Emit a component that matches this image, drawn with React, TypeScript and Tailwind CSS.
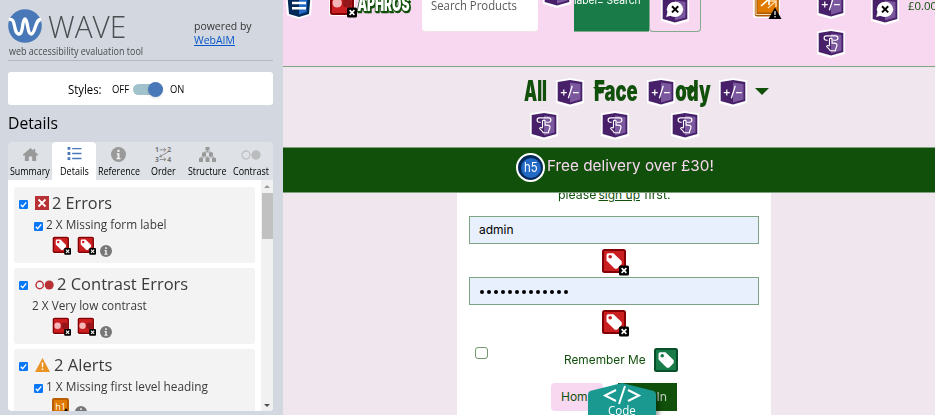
import React from "react";

const sans = "font-['Open_Sans',sans-serif]";
const inter = "font-['Inter',sans-serif]";

function Fit({ children, w, className = "", underline = false }: { children: string; w: number; className?: string; underline?: boolean }) {
  const ref = React.useRef<HTMLSpanElement>(null);
  const [scale, setScale] = React.useState(1);
  React.useLayoutEffect(() => {
    const measure = () => {
      if (ref.current) setScale(w / ref.current.offsetWidth);
    };
    measure();
    document.fonts.ready.then(measure);
  }, [w]);
  return (
    <span className={"flex shrink-0 whitespace-nowrap " + className} style={{ width: w }}>
      <span ref={ref} className={"block shrink-0 origin-left" + (underline ? " underline" : "")} style={{ transform: `scaleX(${scale})` }}>{children}</span>
    </span>
  );
}

function Hex({ kind, className }: { kind: "expand" | "hand" | "label"; className: string }) {
  return (
    <svg viewBox="0 0 30 30" className={"absolute h-[30px] w-[30px] " + className}>
      <path d="M15 1 L29 3.5 V26 L15 30 L1 26 V3.5Z" fill="#fff" />
      <path d="M15 3 L27.3 5 V24 L15 27.5 L2.7 24 V5Z" fill="#472069" />
      <path d="M15 5.5 L25.5 7 V22.5 L15 25.5Z" fill="#7b579d" />
      {kind === "expand" && (
        <path d="M5.8 15.5h6M8.8 12.5v6M17.3 8.8l-4 12.5M18 15.5h5.8" stroke="#fff" strokeWidth="1.25" fill="none" />
      )}
      {kind === "hand" && (
        <path d="M11.8 12.2H10.3a2.2 2.2 0 0 1 0-4.4h9.4a2.2 2.2 0 0 1 0 4.4H17M13.5 17.5V10.8q1.4-1.4 2.6 0v4.4q4.7-.5 4.9 1.7c0 2-1.6 3.2-1.6 5.8h-5.2c-.8-2.2-2.4-2.5-3.6-4.2q1-1.8 2.9-.2" stroke="#fff" strokeWidth="1.15" fill="none" />
      )}
      {kind === "label" && (
        <>
          <ellipse cx="15" cy="14.3" rx="8.2" ry="7.6" fill="#fff" />
          <path d="M7.5 17 L6.2 22 L13 20Z" fill="#fff" />
          <path d="M12 11.2l6.2 6.2M18.2 11.2L12 17.4" stroke="#000" strokeWidth="2" />
        </>
      )}
    </svg>
  );
}

function Mark({ kind, className, green = false, badge = true }: { kind: "tag" | "contrast"; className: string; green?: boolean; badge?: boolean }) {
  return (
    <svg viewBox="0 0 28 28" className={className}>
      <rect x="0" y="0" width="26" height="26" rx="3" fill="#fff" />
      <rect x="1" y="1" width="24" height="24" rx="2.5" fill={green ? "#064f28" : "#800005"} />
      <rect x="3" y="3" width="20" height="20" fill={green ? "#187b48" : "#ca1e20"} />
      {kind === "tag" ? (
        <>
          <path d="M5.5 7 Q5.5 5.3 7.2 5.3 H12.5 L20.7 13.3 V16 L16 20.8 H13.8 L5.5 12.5Z" fill="#fff" />
          <circle cx="9.2" cy="8.8" r="1.8" fill={green ? "#187b48" : "#ca1e20"} />
        </>
      ) : (
        <>
          <circle cx="8.2" cy="12.9" r="4.7" fill="#f5b6b9" />
          <circle cx="18.2" cy="12.9" r="4.7" fill="#94161a" />
        </>
      )}
      {badge && (
        <>
          <rect x="18" y="17.5" width="10" height="10" rx="1.5" fill="#000" />
          <path d="M20.6 20.1l4.8 4.8M25.4 20.1l-4.8 4.8" stroke="#fff" strokeWidth="1.6" />
        </>
      )}
    </svg>
  );
}

function Check({ className = "" }: { className?: string }) {
  return (
    <svg viewBox="0 0 10 10" className={"h-[9px] w-[9px] shrink-0 " + className}>
      <rect width="10" height="10" rx="1.3" fill="#0878f8" />
      <path d="M2 5.2 L4.1 7.4 L8 2.7" stroke="#fff" strokeWidth="1.5" fill="none" />
    </svg>
  );
}

function Info({ className = "", color = "#777" }: { className?: string; color?: string }) {
  return (
    <svg viewBox="0 0 16 16" className={"shrink-0 " + className}>
      <circle cx="8" cy="8" r="8" fill={color} />
      <path d="M6 6.7h3v5h1.2v1.3H5.8v-1.3H7V8H6ZM6.9 3h2.2v2.2H6.9Z" fill="#f1f1f1" />
    </svg>
  );
}

function Tab({ w, label, tw, active = false, children }: { w: string; label: string; tw: number; active?: boolean; children: React.ReactNode }) {
  return (
    <div className={"flex h-full flex-col items-center rounded-t " + w + (active ? " bg-white" : "")}>
      <div className="flex h-[22px] w-full items-end justify-center">{children}</div>
      <Fit w={tw} className="mt-[1px] text-[10px] leading-[13px] text-black">{label}</Fit>
    </div>
  );
}

function Sidebar() {
  return (
    <aside className={"flex h-full w-[283px] shrink-0 flex-col bg-[#d3d8e0] pl-2 pr-[10px] " + sans}>
      <header className="flex h-[61px] w-[265px] shrink-0 border-b border-[#b5b9bb]">
        <div className="w-[186px]">
          <div className="flex h-[43px] pt-[9px]">
            <svg viewBox="0 0 34 34" className="h-[34px] w-[34px]">
              <circle cx="17" cy="17" r="16.8" fill="#4978b8" />
              <path d="M1 10.5C5 10 5.5 12 6.4 16.5C7.5 22 8.3 25 11 25C15.5 25 14 10 17 10S19 25 23.2 25C27.5 25 27 10 33 10.5" stroke="#fff" strokeWidth="3.3" fill="none" />
            </svg>
            <Fit w={78} className="ml-[6px] text-[31px] font-light leading-[35px] text-[#4b4e50]">WAVE</Fit>
          </div>
          <Fit w={134} className="ml-[1px] text-[10px] leading-[16px] text-[#484b4e]">web accessibility evaluation tool</Fit>
        </div>
        <div className="flex flex-col pt-[19px] text-[11px] leading-[14px] text-[#333]">
          <Fit w={58}>powered by</Fit>
          <Fit w={41} underline className="text-[#0755c8]">WebAIM</Fit>
        </div>
      </header>
      <div className="mt-[11px] flex h-[33px] w-[265px] shrink-0 items-center rounded-[3px] bg-white pl-[60px] text-black">
        <Fit w={34} className="mt-[2px] text-[12px]">Styles:</Fit>
        <Fit w={17} className="ml-[10px] mt-[1px] text-[10px]">OFF</Fit>
        <div className="ml-[4px] mt-[2px] flex h-[11px] w-[30px] items-center justify-end rounded-full bg-[#a1c2ca]">
          <div className="h-[15px] w-[15px] rounded-full bg-[#4978b8] shadow-sm" />
        </div>
        <Fit w={14} className="ml-[7px] mt-[1px] text-[10px]">ON</Fit>
      </div>
      <h1 className="mt-[6px] h-[31px] shrink-0 text-[16px] leading-[25px] text-black"><Fit w={50}>Details</Fit></h1>
      <nav className="flex h-[38px] w-[265px] shrink-0 rounded-t bg-[#dee2e7]">
        <Tab w="w-[44px]" label="Summary" tw={40}>
          <svg viewBox="0 0 16 16" className="mb-[2px] h-[15px] w-[15px]"><path d="M0 8 8 1l3 2.6V2h2v3.4L16 8v1h-2v6H9.8v-5H6.2v5H2V9H0Z" fill="#999" /></svg>
        </Tab>
        <Tab w="w-[44px]" label="Details" tw={29} active>
          <svg viewBox="0 0 15 14" className="mb-[4px] h-[13px] w-[15px]"><path d="M0 0h3v3H0ZM5 1h10v1.5H5ZM0 5.5h3v3H0ZM5 6.2h10v1.5H5ZM0 11h3v3H0ZM5 11.7h10v1.5H5Z" fill="#4978b8" /></svg>
        </Tab>
        <Tab w="w-[45px]" label="Reference" tw={42}><Info color="#999" className="mb-[2px] h-[15px] w-[15px]" /></Tab>
        <Tab w="w-[44px]" label="Order" tw={25}>
          <svg viewBox="0 0 18 18" className="h-[18px] w-[17px]">
            <g fill="#777" fontFamily="Open Sans" fontSize="7.2" fontWeight="700"><text x="0" y="6.2">1</text><text x="13" y="6.2">2</text><text x="0" y="16.5">3</text><text x="13" y="16.5">4</text></g>
            <path d="M5 3.5h6.5M9.4 1.6l2.1 1.9-2.1 1.9M5 13.7h6.5M9.4 11.8l2.1 1.9-2.1 1.9M13.5 6L5 10.8M7.5 10.9H5l1-2.3" stroke="#888" fill="none" />
          </svg>
        </Tab>
        <Tab w="w-[44px]" label="Structure" tw={38}>
          <svg viewBox="0 0 17 15" className="mb-[2px] h-[15px] w-[17px]"><path d="M6.5 0h4v3.5h-4ZM3 5.5h4V9H3ZM10 5.5h4V9h-4ZM0 11h4v4H0ZM6.5 11h4v4h-4ZM13 11h4v4h-4Z" fill="#999" /><path d="M8.5 3v2H5v5H2v2m3-2h3.5v2M8.5 5H12v5h3v2m-3-2H8.5" fill="none" stroke="#999" strokeWidth=".9" /></svg>
        </Tab>
        <Tab w="w-[44px]" label="Contrast" tw={36}>
          <svg viewBox="0 0 20 10" className="mb-[4px] h-[10px] w-[20px]"><circle cx="5" cy="5" r="4" fill="none" stroke="#bfc1c3" strokeWidth="1.3" /><circle cx="15" cy="5" r="4.7" fill="#babcbe" /></svg>
        </Tab>
      </nav>
      <div className="mb-1 flex min-h-0 w-[265px] flex-1 overflow-hidden rounded-b bg-white">
        <div className="flex w-[253px] flex-col gap-[5px] overflow-hidden px-[6px] pt-[7px] text-[#3a3a3a]">
          <section className="h-[76px] shrink-0 rounded-[3px] bg-[#f3f3f3]">
            <div className="flex h-[32px] items-center pl-[5px]">
              <Check className="mt-[3px]" />
              <svg viewBox="0 0 14 14" className="ml-[7px] h-[14px] w-[14px]"><path d="M0 0h14v14H0Z" fill="#b93134" /><path d="m3.5 3.5 7 7m0-7-7 7" stroke="#fff" strokeWidth="1.8" /></svg>
              <Fit w={60} className="ml-[3px] text-[16px]">2 Errors</Fit>
            </div>
            <div className="flex h-[12px] items-center pl-[20px]"><Check className="mt-[2px]" /><Fit w={121} className="ml-[3px] text-[12px]">2 X Missing form label</Fit></div>
            <div className="flex items-start pl-[38px] pt-[5px]"><Mark kind="tag" className="h-[19px] w-[19px]" /><Mark kind="tag" className="ml-[6px] h-[19px] w-[19px]" /><Info className="ml-[4px] mt-[9px] h-3 w-3" /></div>
          </section>
          <section className="h-[76px] shrink-0 rounded-[3px] bg-[#f3f3f3]">
            <div className="flex h-[32px] items-center pl-[5px]">
              <Check className="mt-[3px]" />
              <svg viewBox="0 0 19 10" className="ml-[7px] mt-[2px] h-[10px] w-[19px]"><circle cx="4.7" cy="5" r="3.7" fill="none" stroke="#b93134" strokeWidth="1.4" /><circle cx="14.2" cy="5" r="4.5" fill="#b93134" /></svg>
              <Fit w={131} className="ml-[3px] text-[16px]">2 Contrast Errors</Fit>
            </div>
            <div className="flex h-[12px] items-center pl-[18px]"><Fit w={115} className="text-[12px]">2 X Very low contrast</Fit></div>
            <div className="flex items-start pl-[38px] pt-[5px]"><Mark kind="contrast" className="h-[19px] w-[19px]" /><Mark kind="contrast" className="ml-[6px] h-[19px] w-[19px]" /><Info className="ml-[4px] mt-[9px] h-3 w-3" /></div>
          </section>
          <section className="h-[76px] shrink-0 rounded-[3px] bg-[#f3f3f3]">
            <div className="flex h-[32px] items-center pl-[5px]">
              <Check className="mt-[3px]" />
              <svg viewBox="0 0 15 14" className="ml-[7px] h-[14px] w-[15px]"><path d="M7.5 0 15 14H0Z" fill="#ea9222" /><path d="M6.7 4.5h1.6l-.2 4.8H6.9ZM6.7 10.5h1.6v1.6H6.7Z" fill="#fff" /></svg>
              <Fit w={58} className="ml-[4px] text-[16px]">2 Alerts</Fit>
            </div>
            <div className="flex h-[12px] items-center pl-[20px]"><Check className="mt-[2px]" /><Fit w={162} className="ml-[3px] text-[12px]">1 X Missing first level heading</Fit></div>
            <div className="flex items-start pl-[38px] pt-[5px]">
              <div className="relative flex h-[18px] w-[17px] justify-center rounded-[2px] border-2 border-[#b85d00] bg-[#df7900] text-[9px] leading-[14px] text-white">h1<i className="absolute -right-[3px] top-[8px] border-x-[4px] border-b-[7px] border-x-transparent border-b-black" /></div>
              <Info className="ml-[6px] mt-[8px] h-3 w-3" />
            </div>
          </section>
        </div>
        <div className="flex flex-1 flex-col items-center justify-between bg-[#f1f1f1] pb-[4px] pt-[5px]">
          <div className="flex flex-col items-center"><i className="border-x-[3px] border-b-[3px] border-x-transparent border-b-[#9b9b9b]" /><div className="mt-[5px] h-[46px] w-[11px] bg-[#c1c1c1]" /></div>
          <i className="border-x-[3px] border-t-[3px] border-x-transparent border-t-[#505050]" />
        </div>
      </div>
    </aside>
  );
}

function ShopHeader() {
  return (
    <header className="relative flex h-[67px] shrink-0 overflow-hidden border-b border-[#7fa582] bg-[#f8d7f0]">
      <svg viewBox="0 0 28 30" className="absolute -top-[11px] left-[2px] h-[30px] w-[28px]"><path d="M0 0h28l-2 26-12 4-12-4Z" fill="#fff" /><path d="M2 2h24l-2 23-10 3-10-3Z" fill="#032958" /><path d="M14 3h9l-1.5 20-7.5 2.5Z" fill="#2369c6" /><path d="M7 14h14M7 19.3h14" stroke="#fff" strokeWidth="2.4" /></svg>
      <svg viewBox="0 0 58 16" className="ml-[73px] h-[16px] w-[58px] drop-shadow-[1px_1px_0_#11500b]">
        <text x="1.5" y="11" textLength="52" lengthAdjust="spacingAndGlyphs" fontFamily="Inter" fontWeight="900" fontSize="20" fill="#fff" stroke="#11500b" strokeWidth="2.6" paintOrder="stroke">APHROS</text>
      </svg>
      <Mark kind="contrast" className="absolute -top-[10px] left-[46px] h-[28px] w-[28px]" />
      <div className={"ml-[8px] h-[32px] w-[116px] rounded-b border-b border-[#eee3ec] bg-white pl-[9px] text-[12px] leading-[12px] text-[#5a5a5e] " + sans}><Fit w={86}>Search Products</Fit></div>
      <div className={"ml-[36px] h-[32px] w-[75px] overflow-hidden border-b border-[#83aa8d] bg-[#187b48] text-[11px] text-white " + inter}><Fit w={67} className="-mt-[7px] leading-[14px]">label= Search</Fit></div>
      <div className="h-[32px] w-[52px] rounded-b border border-t-0 border-[#83aa8d]" />
      <Hex kind="expand" className="-top-[22px] left-[259px]" />
      <Hex kind="label" className="-top-[5px] left-[377px]" />
      <svg viewBox="0 0 30 30" className="absolute -top-[11px] left-[470px] h-[30px] w-[30px]"><rect width="27" height="29" rx="3" fill="#fff" /><rect x="1.8" y="0" width="24" height="27.5" rx="2" fill="#ad5b00" /><path d="M3 0v25.5h21.5" stroke="#f4ddc0" fill="none" /><path d="M4.5 0h20v23.5h-20Z" fill="#df7900" /><path d="m8 17 8-7m-7 0h7v6" stroke="#fff" strokeWidth="1.6" fill="none" /><path d="m15 19 8-7m-6 0h6v6" stroke="#ffd5a0" strokeWidth="1.6" fill="none" /><path d="M22 18.5 28.5 30h-13Z" fill="#000" /><path d="M22 22v4m0 1v1.5" stroke="#fff" strokeWidth="1.2" /></svg>
      <Hex kind="expand" className="-top-[11px] left-[533px]" />
      <Hex kind="hand" className="top-[28px] left-[533px]" />
      <Hex kind="label" className="-top-[5px] left-[587px]" />
      <div className={"ml-auto w-[27px] overflow-hidden text-[11px] leading-[12px] text-[#11500b] " + sans}><Fit w={29}>£0.00</Fit></div>
    </header>
  );
}

function CategoryNav() {
  const item = "text-[28px] font-black leading-[32px] text-[#11500b] " + inter;
  return (
    <nav className="relative flex h-[80px] shrink-0 pl-[241px] pt-[8px]">
      <Fit w={23} className={item}>All</Fit>
      <Fit w={44} className={item + " ml-[47px]"}>Face</Fit>
      <Fit w={48} className={item + " ml-[25px]"}>Body</Fit>
      <i className="absolute left-[310px] top-[20px] border-x-[7px] border-t-[7px] border-x-transparent border-t-[#11500b]" />
      <i className="absolute left-[401px] top-[20px] border-x-[7px] border-t-[7px] border-x-transparent border-t-[#11500b]" />
      <i className="ml-[44px] mt-[13px] h-0 w-0 border-x-[7px] border-t-[7px] border-x-transparent border-t-[#11500b]" />
      <Hex kind="expand" className="left-[271.5px] top-[9.5px]" />
      <Hex kind="expand" className="left-[362.5px] top-[9.5px]" />
      <Hex kind="expand" className="left-[435px] top-[9.5px]" />
      <Hex kind="hand" className="left-[246px] top-[42.5px]" />
      <Hex kind="hand" className="left-[316.5px] top-[42.5px]" />
      <Hex kind="hand" className="left-[386.5px] top-[42.5px]" />
    </nav>
  );
}

export default function App() {
  return (
    <div className="flex h-[415px] w-[935px] overflow-hidden">
      <Sidebar />
      <main className={"flex w-[652px] flex-col overflow-hidden bg-[#f0e6ee] " + inter}>
        <ShopHeader />
        <CategoryNav />
        <div className="relative z-10 flex h-[46px] shrink-0 border-y border-[#7fa07c] bg-[#11500b] pl-[233px] pt-[5px]">
          <div className="flex h-[29px] w-[29px] items-center justify-center rounded-full border-2 border-white bg-[#032958]">
            <div className="flex h-[20px] w-[20px] items-center justify-center rounded-full bg-[#2369c6] text-[13px] text-white"><Fit w={14}>h5</Fit></div>
          </div>
          <Fit w={167} className="ml-[2px] text-[15px] leading-[25px] text-[#f8d7f0]">Free delivery over £30!</Fit>
        </div>
        <div className="-mt-[8px] ml-[174px] flex h-[240px] w-[314px] shrink-0 flex-col items-center bg-white text-[12px] text-[#11500b]">
          <div className="mt-[2px] flex h-[29px] w-[113px] justify-between leading-[16px]"><Fit w={38}>please</Fit><Fit w={42} underline>sign up</Fit><Fit w={27}>first.</Fit></div>
          <div className="flex h-[28px] w-[290px] shrink-0 items-center border border-[#7ba384] bg-[#e8effd] pl-[9px] text-black"><Fit w={35}>admin</Fit></div>
          <Mark kind="tag" className="ml-[2px] mt-[4px] h-[28px] w-[28px] shrink-0" />
          <div className="mt-[1px] flex h-[28px] w-[290px] shrink-0 items-center gap-[3px] border border-[#7ba384] bg-[#e8effd] pl-[10px] pt-[1px]">
            {Array.from({ length: 13 }, (_, i) => <span key={i} className="h-[4px] w-[4px] rounded-full bg-black" />)}
          </div>
          <Mark kind="tag" className="ml-[2px] mt-[4px] h-[28px] w-[28px] shrink-0" />
          <div className="mt-[9px] flex h-[28px] w-[290px] shrink-0 items-start pl-[6px]">
            <div className="mt-[1px] h-[12px] w-[13px] rounded-[3px] border border-[#73956f] bg-white" />
            <Fit w={82} className="ml-[76px] mt-[5px] leading-[17px]">Remember Me</Fit>
            <Mark kind="tag" green badge={false} className="ml-[7px] mt-[1px] h-[28px] w-[28px] shrink-0" />
          </div>
          <div className="relative mt-[9px] flex h-[28px] w-[126px] shrink-0">
            <div className="w-[52px] rounded bg-[#f8d7f0] pl-[10px] leading-[27px]"><Fit w={34}>Home</Fit></div>
            <div className="ml-[15px] flex flex-1 items-center justify-end bg-[#11500b] pr-[10px] text-[#c2d1c0]"><Fit w={36}>Log In</Fit></div>
            <div className={"absolute left-[36px] top-0 flex h-[40px] w-[70px] flex-col items-center text-white drop-shadow-[3px_3px_2px_rgba(0,0,0,0.35)] " + sans}>
              <svg viewBox="0 0 70 40" className="absolute h-full w-full"><path d="M35 0 67 8Q69 9 69 12V40H1V12Q1 9 3 8Z" fill="#199990" /><path d="m29 7-11 5.5L29 18M41 7l11 5.5L41 18M38 3l-6 18" stroke="#fff" strokeWidth="2" fill="none" /></svg>
              <Fit w={28} className="relative mt-[19px] text-[12px] leading-[17px]">Code</Fit>
            </div>
          </div>
        </div>
      </main>
    </div>
  );
}
